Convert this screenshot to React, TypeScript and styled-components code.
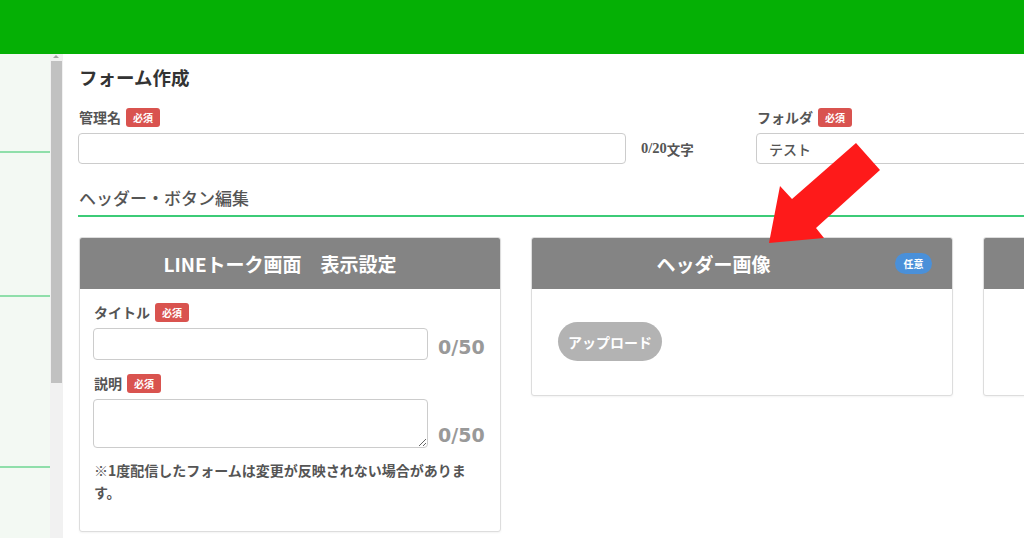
import React from "react";
import styled, { createGlobalStyle } from "styled-components";

const Global = createGlobalStyle`
  html, body { margin: 0; padding: 0; background: #fff; }
  body { font-family: "Noto Sans CJK JP", "Noto Sans", sans-serif; color: #555; }
  * { box-sizing: border-box; }
`;

const Page = styled.div`
  position: relative;
  width: 1024px;
  height: 538px;
  overflow: hidden;
  display: flex;
  flex-direction: column;
`;

const TopBar = styled.header`
  height: 54px;
  flex-shrink: 0;
  background: #05b005;
`;

const Body = styled.div`
  flex: 1;
  display: flex;
  min-height: 0;
`;

const Sidebar = styled.nav`
  width: 50px;
  flex-shrink: 0;
  background: #f3f9f3;
  display: flex;
  flex-direction: column;
`;

const NavItem = styled.div<{ $h: number }>`
  height: ${(p) => p.$h}px;
  flex-shrink: 0;
  border-bottom: 2px solid #8fdfaa;
`;

const ScrollTrack = styled.div`
  width: 13px;
  flex-shrink: 0;
  background: #f1f1f1;
  display: flex;
  flex-direction: column;
  align-items: flex-start;
`;

const ScrollArrow = styled.div`
  margin: 1px 0 0 3px;
  width: 0;
  height: 0;
  border-left: 3px solid transparent;
  border-right: 3px solid transparent;
  border-bottom: 3px solid #a3a3a3;
`;

const ScrollThumb = styled.div`
  margin: 3px 0 0 1px;
  width: 11px;
  height: 322px;
  background: #c1c1c1;
`;

const Main = styled.main`
  flex: 1;
  min-width: 0;
  padding: 12px 0 0 15px;
  overflow: hidden;
`;

const PageTitle = styled.h1`
  margin: 0 0 0 1px;
  font-size: 18.5px;
  line-height: 22px;
  font-weight: 700;
  color: #333;
`;

const FieldRow = styled.div`
  display: flex;
  align-items: flex-end;
  margin-top: 19px;
`;

const Field = styled.div<{ $w: number }>`
  width: ${(p) => p.$w}px;
  flex-shrink: 0;
`;

const Label = styled.div`
  display: flex;
  align-items: center;
  gap: 5px;
  height: 20px;
  font-size: 14px;
  font-weight: 700;
  color: #555;
  padding-left: 1px;
`;

const Required = styled.span`
  display: inline-flex;
  align-items: center;
  justify-content: center;
  height: 19px;
  padding: 0 7px;
  border-radius: 3px;
  background: #d9534f;
  color: #fff;
  font-size: 10px;
  font-weight: 700;
`;

const TextInput = styled.div<{ $h: number }>`
  margin-top: 6px;
  height: ${(p) => p.$h}px;
  border: 1px solid #ccc;
  border-radius: 4px;
  background: #fff;
  display: flex;
  align-items: center;
  padding: 0 12px;
  font-size: 14px;
  font-weight: 500;
  color: #555;
`;

const CharCount = styled.div`
  width: 130px;
  flex-shrink: 0;
  padding-left: 15px;
  height: 31px;
  display: flex;
  align-items: center;
  font-size: 13.5px;
  font-weight: 700;
  color: #555;
`;

const SerifNum = styled.span`
  font-family: "Liberation Serif", serif;
  font-size: 14.5px;
`;

const SectionHeading = styled.h2`
  margin: 22px 0 0;
  padding: 0 0 5px 1px;
  font-size: 17px;
  line-height: 24px;
  font-weight: 500;
  color: #555;
  border-bottom: 2px solid #3ccb77;
`;

const Cards = styled.div`
  display: flex;
  align-items: flex-start;
  gap: 30px;
  margin: 20px 0 0 1px;
`;

const Card = styled.section`
  width: 422px;
  flex-shrink: 0;
  border: 1px solid #ddd;
  border-radius: 3px;
  background: #fff;
  box-shadow: 0 1px 2px rgba(0, 0, 0, 0.05);
  overflow: hidden;
`;

const CardHeader = styled.div`
  height: 51px;
  background: #848484;
  display: flex;
  align-items: center;
  padding-right: 20px;
`;

const CardTitle = styled.div`
  flex: 1;
  text-align: center;
  color: #fff;
  font-size: 19px;
  font-weight: 700;
`;

const Optional = styled.span`
  display: inline-flex;
  align-items: center;
  justify-content: center;
  width: 37px;
  height: 21px;
  border-radius: 11px;
  background: #4a90d9;
  color: #fff;
  font-size: 10px;
  font-weight: 700;
`;

const CardBody = styled.div<{ $pad: string }>`
  padding: ${(p) => p.$pad};
`;

const Group = styled.div<{ $gap?: number }>`
  margin-top: ${(p) => p.$gap ?? 0}px;
`;

const InputLine = styled.div`
  display: flex;
  align-items: flex-end;
  gap: 10px;
`;

const BoxInput = styled.div<{ $h: number }>`
  width: 335px;
  height: ${(p) => p.$h}px;
  margin-top: 6px;
  border: 1px solid #ccc;
  border-radius: 4px;
  background: #fff;
`;

const TextArea = styled.textarea`
  display: block;
  width: 335px;
  height: 49px;
  margin: 6px 0 0;
  border: 1px solid #ccc;
  border-radius: 4px;
  background: #fff;
  resize: vertical;
  outline: none;
  font-family: inherit;
`;

const Count = styled.div`
  font-family: "DejaVu Sans", sans-serif;
  font-size: 19px;
  font-weight: 700;
  line-height: 26px;
  color: #999;
`;

const Note = styled.p`
  margin: 11px 0 0 1px;
  width: 380px;
  font-size: 14px;
  line-height: 22px;
  font-weight: 700;
  color: #555;
`;

const UploadButton = styled.button`
  height: 39px;
  padding: 0 10px;
  border: none;
  border-radius: 20px;
  background: #b3b3b3;
  color: #fff;
  font-family: inherit;
  font-size: 14px;
  font-weight: 700;
`;

const Spacer = styled.div`
  height: 39px;
`;

const Arrow = styled.svg`
  position: absolute;
  left: 0;
  top: 0;
  pointer-events: none;
`;

export default function App() {
  return (
    <>
      <Global />
      <Page>
        <TopBar />
        <Body>
          <Sidebar>
            <NavItem $h={99} />
            <NavItem $h={144} />
            <NavItem $h={171} />
          </Sidebar>
          <ScrollTrack>
            <ScrollArrow />
            <ScrollThumb />
          </ScrollTrack>
          <Main>
            <PageTitle>フォーム作成</PageTitle>
            <FieldRow>
              <Field $w={548}>
                <Label>
                  管理名<Required>必須</Required>
                </Label>
                <TextInput $h={31} />
              </Field>
              <CharCount>
                <SerifNum>0/20</SerifNum>文字
              </CharCount>
              <Field $w={320}>
                <Label>
                  フォルダ<Required>必須</Required>
                </Label>
                <TextInput $h={31}>テスト</TextInput>
              </Field>
            </FieldRow>
            <SectionHeading>ヘッダー・ボタン編集</SectionHeading>
            <Cards>
              <Card>
                <CardHeader>
                  <CardTitle>LINEトーク画面　表示設定</CardTitle>
                </CardHeader>
                <CardBody $pad="13px 13px 28px">
                  <Group>
                    <Label>
                      タイトル<Required>必須</Required>
                    </Label>
                    <InputLine>
                      <BoxInput $h={32} />
                      <Count>0/50</Count>
                    </InputLine>
                  </Group>
                  <Group $gap={13}>
                    <Label>
                      説明<Required>必須</Required>
                    </Label>
                    <InputLine>
                      <TextArea />
                      <Count>0/50</Count>
                    </InputLine>
                  </Group>
                  <Note>※1度配信したフォームは変更が反映されない場合があります。</Note>
                </CardBody>
              </Card>
              <Card>
                <CardHeader>
                  <CardTitle>ヘッダー画像</CardTitle>
                  <Optional>任意</Optional>
                </CardHeader>
                <CardBody $pad="33px 26px 34px">
                  <UploadButton>アップロード</UploadButton>
                </CardBody>
              </Card>
              <Card>
                <CardHeader />
                <CardBody $pad="33px 26px 34px">
                  <Spacer />
                </CardBody>
              </Card>
            </Cards>
          </Main>
        </Body>
        <Arrow width="1024" height="538" viewBox="0 0 1024 538">
          <polygon
            points="769,243 780,186 792,199 856,143 880,170 816,228 824,238"
            fill="#fe1a1a"
          />
        </Arrow>
      </Page>
    </>
  );
}
